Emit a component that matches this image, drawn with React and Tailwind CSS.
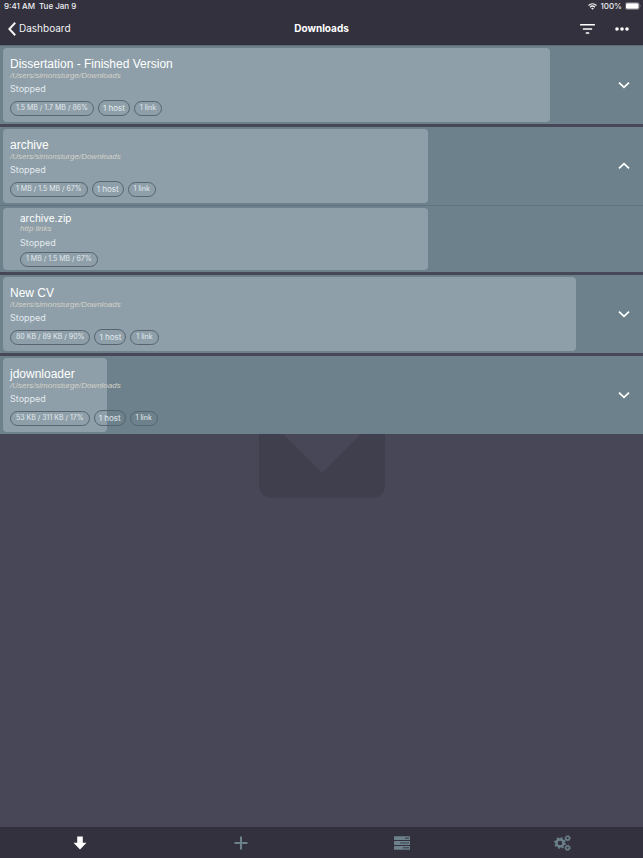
import React, { useState } from 'react';

const downloads = [
  { name: 'Dissertation - Finished Version', size: '1.5 MB / 1.7 MB / 86%', percent: 85.9 },
  {
    name: 'archive',
    size: '1 MB / 1.5 MB / 67%',
    percent: 66.7,
    links: [{ name: 'archive.zip', type: 'http links', size: '1 MB / 1.5 MB / 67%', percent: 66.7 }],
  },
  { name: 'New CV', size: '80 KB / 89 KB / 90%', percent: 90 },
  { name: 'jdownloader', size: '53 KB / 311 KB / 17%', percent: 16.4 },
];

const Pill = ({ large, children }) => (
  <span
    className={`flex items-center rounded-full border border-[#56656f] whitespace-nowrap text-[#e3eaee] ${
      large ? 'h-4 px-1 text-[8px]' : 'h-[15px] px-[5px] text-[7px]'
    }`}
  >
    {children}
  </span>
);

// Progress fill shares the grid cell with the row's content
const Progress = ({ percent }) => (
  <div
    className="col-start-1 row-start-1 rounded-sm bg-[#8e9fa9]"
    style={{ width: `${percent}%` }}
  />
);

const PackageRow = ({ item, isOpen, onToggle }) => (
  <div className="grid bg-[#6c818b] px-[3px] py-[2px]">
    <Progress percent={item.percent} />
    <div className="col-start-1 row-start-1 flex h-[74px] items-center justify-between pl-[7px]">
      <div className="pt-[2px]">
        <h2 className="font-['Liberation_Sans',sans-serif] text-[12px] leading-4 text-white">{item.name}</h2>
        <p className="font-['Liberation_Sans',sans-serif] text-[8px] leading-2 text-[#d5d2c8] italic">
          /Users/simonsturge/Downloads
        </p>
        <p className="mt-[3px] text-[9px] leading-3 text-[#e3eaee]">Stopped</p>
        <div className="mt-[5px] flex items-center gap-1">
          <Pill>{item.size}</Pill>
          <Pill large>1 host</Pill>
          <Pill>1 link</Pill>
        </div>
      </div>
      <button onClick={onToggle} aria-label="Toggle links" aria-expanded={isOpen} className="px-[10px] py-2 text-white">
        <svg className="h-3 w-3" viewBox="0 0 12 12" fill="none" stroke="currentColor" strokeWidth="1.8">
          <path d={isOpen ? 'M1 8.3L6 3.7L11 8.3' : 'M1 3.7L6 8.3L11 3.7'} />
        </svg>
      </button>
    </div>
  </div>
);

const LinkRow = ({ link }) => (
  <div className="grid border-t border-[#5f7480] bg-[#6c818b] px-[3px] py-[2px]">
    <Progress percent={link.percent} />
    <div className="col-start-1 row-start-1 flex h-[62px] flex-col items-start justify-center pl-[17px]">
      <h3 className="text-[10px] leading-3 text-white">{link.name}</h3>
      <p className="font-['Liberation_Sans',sans-serif] text-[8px] leading-[10px] text-[#d5d2c8] italic">{link.type}</p>
      <p className="mt-[3px] text-[9px] leading-3 text-[#e3eaee]">Stopped</p>
      <div className="mt-[3px]">
        <Pill>{link.size}</Pill>
      </div>
    </div>
  </div>
);

const StatusBar = () => (
  <div className="flex h-3 items-center justify-between pr-[2px] pl-1 text-[8px] font-medium text-[#eeeef2]">
    <div className="flex gap-1">
      <span>9:41 AM</span>
      <span>Tue Jan 9</span>
    </div>
    <div className="flex items-center gap-[3px]">
      <svg className="h-[7px] w-[9px]" viewBox="0 0 18 14" fill="none" stroke="currentColor" strokeWidth="2.4">
        <path d="M1 5C5.6 .6 12.4 .6 17 5" />
        <path d="M4 8.4C6.8 5.7 11.2 5.7 14 8.4" />
        <path d="M9 13.5L6.2 10.7C7.8 9.3 10.2 9.3 11.8 10.7Z" fill="currentColor" stroke="none" />
      </svg>
      <span>100%</span>
      <svg className="h-2 w-4" viewBox="0 0 16 8">
        <rect x=".3" y=".5" width="14" height="7" rx="1.8" fill="none" stroke="#8f8f98" strokeWidth=".6" />
        <rect x="1" y="1.2" width="12.6" height="5.6" rx="1.2" fill="#fff" />
        <path d="M15 2.8Q16 4 15 5.2Z" fill="#8f8f98" />
      </svg>
    </div>
  </div>
);

const Header = () => (
  <header className="border-b border-[#5a6a76] bg-[#32313d]">
    <StatusBar />
    <div className="grid h-[33px] grid-cols-3 items-center pr-[14px] pl-2">
      <a href="#dashboard" className="flex items-center gap-[3px] text-[10px] text-[#f3f3f6]">
        <svg className="h-[14px] w-2" viewBox="0 0 8 14" fill="none" stroke="currentColor" strokeWidth="2">
          <path d="M7.2 .8L1.4 7L7.2 13.2" />
        </svg>
        Dashboard
      </a>
      <h1 className="pl-[6px] text-center text-[10px] font-bold text-white">Downloads</h1>
      <div className="flex items-center justify-end gap-5 text-white">
        <button aria-label="Filter">
          <svg className="h-[10px] w-[15px]" viewBox="0 0 15 10" fill="currentColor">
            <rect width="15" height="1.6" rx=".5" />
            <rect x="2.8" y="4.2" width="9.4" height="1.6" rx=".5" />
            <rect x="5.7" y="8.2" width="3.6" height="1.6" rx=".5" />
          </svg>
        </button>
        <button aria-label="More">
          <svg className="h-1 w-[14px]" viewBox="0 0 14 4" fill="currentColor">
            <circle cx="2" cy="2" r="1.8" />
            <circle cx="7" cy="2" r="1.8" />
            <circle cx="12" cy="2" r="1.8" />
          </svg>
        </button>
      </div>
    </div>
  </header>
);

const TabBar = () => (
  <nav className="grid h-[31px] grid-cols-4 bg-[#32313d] text-[#6c818b]">
    <a href="#downloads" aria-label="Downloads" className="flex items-center justify-center text-white">
      <svg className="h-[14px] w-[14px]" viewBox="0 0 14 14" fill="currentColor">
        <path d="M4.2 .5H9.8V6.8H13.5L7 13.5L.5 6.8H4.2Z" />
      </svg>
    </a>
    <a href="#add" aria-label="Add" className="flex items-center justify-center">
      <svg className="h-[14px] w-[14px]" viewBox="0 0 14 14" fill="currentColor">
        <path d="M6 .5H8V6H13.5V8H8V13.5H6V8H.5V6H6Z" />
      </svg>
    </a>
    <a href="#tasks" aria-label="Tasks" className="flex items-center justify-center">
      <svg className="h-[14px] w-4" viewBox="0 0 16 14">
        <rect y=".3" width="16" height="3.8" rx=".5" fill="currentColor" />
        <rect y="5.1" width="16" height="3.8" rx=".5" fill="currentColor" />
        <rect y="9.9" width="16" height="3.8" rx=".5" fill="currentColor" />
        <path d="M11 2.2H15M9 11.8H15" stroke="#32313d" strokeWidth=".9" />
        <path d="M6 7H15" stroke="#4a5762" strokeWidth="1.4" />
      </svg>
    </a>
    <a href="#settings" aria-label="Settings" className="flex items-center justify-center">
      <svg className="h-4 w-[17px]" viewBox="0 0 17 16" fill="none" stroke="currentColor">
        <circle cx="6" cy="8" r="3.5" strokeWidth="2.4" />
        <circle cx="6" cy="8" r="5" strokeWidth="1.8" strokeDasharray="1.96" />
        <circle cx="13.6" cy="3.2" r="1.8" strokeWidth="1.4" />
        <circle cx="13.6" cy="3.2" r="2.7" strokeWidth="1" strokeDasharray="1.06" />
        <circle cx="13.6" cy="12.8" r="1.8" strokeWidth="1.4" />
        <circle cx="13.6" cy="12.8" r="2.7" strokeWidth="1" strokeDasharray="1.06" />
      </svg>
    </a>
  </nav>
);

const App = () => {
  const [open, setOpen] = useState('archive');

  return (
    <div className="flex min-h-screen flex-col bg-[#484757] font-[Inter,sans-serif]">
      <Header />
      <main className="flex-1">
        <ul className="flex flex-col gap-[3px]">
          {downloads.map((item) => (
            <li key={item.name}>
              <PackageRow
                item={item}
                isOpen={open === item.name}
                onToggle={() => setOpen(open === item.name ? null : item.name)}
              />
              {open === item.name && item.links?.map((link) => <LinkRow key={link.name} link={link} />)}
            </li>
          ))}
        </ul>
        {/* Backdrop logo */}
        <svg className="mx-auto h-16 w-[126px]" viewBox="0 0 126 64">
          <path d="M0 0H24L63 39L102 0H126V50Q126 64 112 64H14Q0 64 0 50Z" fill="#403f4e" />
        </svg>
      </main>
      <TabBar />
    </div>
  );
};

export default App;
